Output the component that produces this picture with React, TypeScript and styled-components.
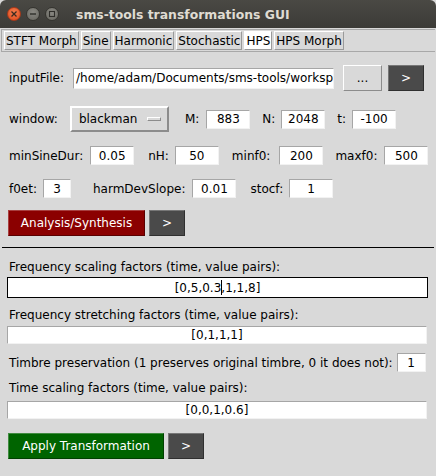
import React from "react";
import styled, { createGlobalStyle, css } from "styled-components";

const Global = createGlobalStyle`
  html, body { margin: 0; padding: 0; background: #d9d9d9; }
  * { box-sizing: border-box; }
`;

const Window = styled.div`
  width: 436px;
  height: 476px;
  background: #d9d9d9;
  display: flex;
  flex-direction: column;
  font-family: "DejaVu Sans", sans-serif;
  font-size: 12px;
  color: #000;
  overflow: hidden;
`;

const TitleBar = styled.div`
  height: 28px;
  flex: none;
  background: linear-gradient(#4a4944, #3c3b37);
  border-radius: 6px 6px 0 0;
  display: flex;
  align-items: center;
  padding-left: 7px;
`;

const Controls = styled.div`
  display: flex;
  gap: 5px;
  margin-right: 17px;
`;

const Circle = styled.div<{ $kind: "close" | "min" | "max" }>`
  width: 14px;
  height: 14px;
  border-radius: 50%;
  display: flex;
  align-items: center;
  justify-content: center;
  ${(p) =>
    p.$kind === "close"
      ? css`
          background: radial-gradient(circle at 50% 35%, #f37c4c, #e0491c);
          border: 1px solid #a8391a;
        `
      : css`
          background: radial-gradient(circle at 50% 35%, #8a8983, #67665f);
          border: 1px solid #35342f;
        `}
`;

const Title = styled.div`
  font-family: "DejaVu Sans", sans-serif;
  font-weight: bold;
  font-size: 12.4px;
  color: #dfdbd2;
`;

const TabBar = styled.div`
  flex: none;
  margin: 1px 1px 0 1px;
  height: 23px;
  border-top: 1px solid #a8a8a8;
  border-left: 1px solid #a8a8a8;
  border-bottom: 1px solid #a8a8a8;
  display: flex;
  align-items: center;
  padding-left: 2px;
  gap: 2px;
`;

const Tab = styled.div<{ $selected?: boolean }>`
  height: 19px;
  padding: 0 1px;
  display: flex;
  align-items: center;
  font-size: 12px;
  background: ${(p) => (p.$selected ? "#ffffff" : "#d9d9d9")};
  border-top: 1px solid #ffffff;
  border-left: 1px solid #ffffff;
  border-right: 1px solid #9a9a9a;
  border-bottom: 1px solid #9a9a9a;
`;

const Content = styled.div`
  display: flex;
  flex-direction: column;
  padding: 0 0 0 9px;
`;

const Row = styled.div<{ $top: number }>`
  display: flex;
  align-items: center;
  margin-top: ${(p) => p.$top}px;
`;

const Label = styled.span<{ $ml?: number; $mr?: number }>`
  margin-left: ${(p) => p.$ml ?? 0}px;
  margin-right: ${(p) => p.$mr ?? 0}px;
  white-space: nowrap;
`;

const Entry = styled.div<{ $w: number; $h?: number; $center?: boolean }>`
  width: ${(p) => p.$w}px;
  height: ${(p) => p.$h ?? 19}px;
  flex: none;
  background: #fff;
  border-top: 1px solid #a6a6a6;
  border-left: 1px solid #a6a6a6;
  border-right: 1px solid #f2f2f2;
  border-bottom: 1px solid #f2f2f2;
  display: flex;
  align-items: center;
  justify-content: ${(p) => (p.$center ? "center" : "flex-start")};
  padding: 0 2px;
  font-size: 12px;
  white-space: nowrap;
  overflow: hidden;
`;

const FocusedEntry = styled(Entry)`
  border: 1px solid #000;
`;

const LightButton = styled.div<{ $w: number; $ml: number }>`
  width: ${(p) => p.$w}px;
  height: 26px;
  margin-left: ${(p) => p.$ml}px;
  background: #d9d9d9;
  border-top: 1px solid #ffffff;
  border-left: 1px solid #ffffff;
  border-right: 1px solid #8c8c8c;
  border-bottom: 1px solid #8c8c8c;
  display: flex;
  align-items: center;
  justify-content: center;
`;

const ColorButton = styled.div<{ $bg: string; $w: number; $ml?: number }>`
  width: ${(p) => p.$w}px;
  height: 26px;
  margin-left: ${(p) => p.$ml ?? 0}px;
  background: ${(p) => p.$bg};
  color: #ffffff;
  border: 1px solid rgba(0, 0, 0, 0.35);
  border-top-color: rgba(255, 255, 255, 0.25);
  border-left-color: rgba(255, 255, 255, 0.25);
  display: flex;
  align-items: center;
  justify-content: center;
  font-size: 12px;
`;

const OptionMenu = styled.div`
  width: 99px;
  height: 26px;
  margin-left: 12px;
  border-top: 2px solid #ffffff;
  border-left: 2px solid #ffffff;
  border-right: 2px solid #8c8c8c;
  border-bottom: 2px solid #8c8c8c;
  display: flex;
  align-items: center;
  justify-content: space-between;
  padding: 0 6px 0 7px;
`;

const Indicator = styled.div`
  width: 14px;
  height: 4px;
  border-top: 1px solid #ffffff;
  border-left: 1px solid #ffffff;
  border-right: 1px solid #8c8c8c;
  border-bottom: 1px solid #8c8c8c;
  background: #d9d9d9;
`;

const Separator = styled.div`
  height: 1px;
  background: #000;
  margin: 11px 2px 0 -7px;
`;

const TextLine = styled.div<{ $top: number }>`
  margin-top: ${(p) => p.$top}px;
  line-height: 14px;
  white-space: nowrap;
`;

const Holder = styled.div<{ $top: number }>`
  margin-top: ${(p) => p.$top}px;
  margin-left: -2px;
  display: flex;
`;

const Caret = styled.span`
  display: inline-block;
  width: 1px;
  height: 15px;
  background: #000;
  margin: 0 -1px 0 0;
`;

export default function App() {
  return (
    <>
      <Global />
      <Window>
        <TitleBar>
          <Controls>
            <Circle $kind="close">
              <svg width="8" height="8" viewBox="0 0 8 8">
                <path d="M1.5 1.5 L6.5 6.5 M6.5 1.5 L1.5 6.5" stroke="#3a2a20" strokeWidth="1.3" />
              </svg>
            </Circle>
            <Circle $kind="min">
              <svg width="8" height="8" viewBox="0 0 8 8">
                <path d="M1 4 H7" stroke="#2f2e2a" strokeWidth="1.4" />
              </svg>
            </Circle>
            <Circle $kind="max">
              <svg width="8" height="8" viewBox="0 0 8 8">
                <rect x="1.5" y="1.5" width="5" height="5" fill="none" stroke="#2f2e2a" strokeWidth="1.1" />
              </svg>
            </Circle>
          </Controls>
          <Title>sms-tools transformations GUI</Title>
        </TitleBar>

        <TabBar>
          <Tab>STFT Morph</Tab>
          <Tab>Sine</Tab>
          <Tab>Harmonic</Tab>
          <Tab>Stochastic</Tab>
          <Tab $selected>HPS</Tab>
          <Tab>HPS Morph</Tab>
        </TabBar>

        <Content>
          <Row $top={13}>
            <Label $mr={9}>inputFile:</Label>
            <Entry $w={261} $h={21}>/home/adam/Documents/sms-tools/workspace</Entry>
            <LightButton $w={39} $ml={9}>...</LightButton>
            <ColorButton $bg="#4a4a4a" $w={36} $ml={6}>&gt;</ColorButton>
          </Row>

          <Row $top={15}>
            <Label>window:</Label>
            <OptionMenu>
              <span>blackman</span>
              <Indicator />
            </OptionMenu>
            <Label $ml={16} $mr={7}>M:</Label>
            <Entry $w={44} $center>883</Entry>
            <Label $ml={12} $mr={6}>N:</Label>
            <Entry $w={44} $center>2048</Entry>
            <Label $ml={12} $mr={6}>t:</Label>
            <Entry $w={44} $center>-100</Entry>
          </Row>

          <Row $top={14}>
            <Label $mr={7}>minSineDur:</Label>
            <Entry $w={44} $center>0.05</Entry>
            <Label $ml={14} $mr={6}>nH:</Label>
            <Entry $w={44} $center>50</Entry>
            <Label $ml={13} $mr={9}>minf0:</Label>
            <Entry $w={44} $center>200</Entry>
            <Label $ml={12} $mr={7}>maxf0:</Label>
            <Entry $w={44} $center>500</Entry>
          </Row>

          <Row $top={14}>
            <Label $mr={6}>f0et:</Label>
            <Entry $w={28} $center>3</Entry>
            <Label $ml={22} $mr={7}>harmDevSlope:</Label>
            <Entry $w={44} $center>0.01</Entry>
            <Label $ml={14} $mr={6}>stocf:</Label>
            <Entry $w={44} $center>1</Entry>
          </Row>

          <Row $top={12}>
            <ColorButton $bg="#8b0000" $w={137} $ml={-1}>Analysis/Synthesis</ColorButton>
            <ColorButton $bg="#4a4a4a" $w={36} $ml={4}>&gt;</ColorButton>
          </Row>

          <Separator />

          <TextLine $top={12}>Frequency scaling factors (time, value pairs):</TextLine>
          <Holder $top={3}>
            <FocusedEntry $w={421} $h={21} $center>
              [0,5,0.3<Caret />,1,1,8]
            </FocusedEntry>
          </Holder>

          <TextLine $top={10}>Frequency stretching factors (time, value pairs):</TextLine>
          <Holder $top={4}>
            <Entry $w={420} $h={18} $center>[0,1,1,1]</Entry>
          </Holder>

          <Row $top={9}>
            <Label $mr={4}>Timbre preservation (1 preserves original timbre, 0 it does not):</Label>
            <Entry $w={29} $center>1</Entry>
          </Row>

          <TextLine $top={9}>Time scaling factors (time, value pairs):</TextLine>
          <Holder $top={6}>
            <Entry $w={420} $h={18} $center>[0,0,1,0.6]</Entry>
          </Holder>

          <Row $top={14}>
            <ColorButton $bg="#006400" $w={156} $ml={-1}>Apply Transformation</ColorButton>
            <ColorButton $bg="#4a4a4a" $w={36} $ml={4}>&gt;</ColorButton>
          </Row>
        </Content>
      </Window>
    </>
  );
}
